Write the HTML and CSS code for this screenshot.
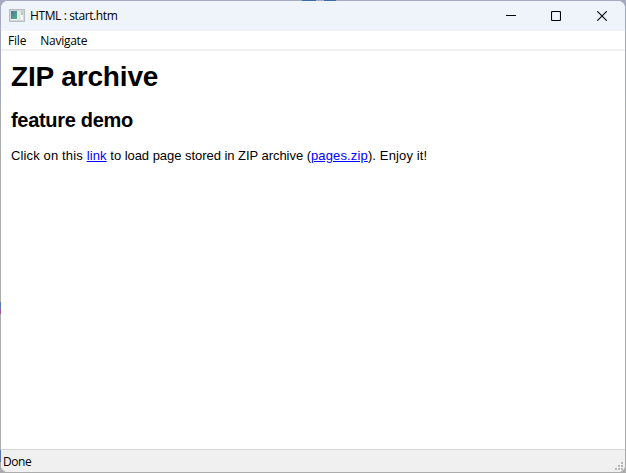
FILE: index.html
```html
<!DOCTYPE html>
<html lang="en">
<head>
<meta charset="utf-8">
<title>HTML : start.htm</title>
<link rel="stylesheet" href="styles.css">
</head>
<body>
<div class="window">
  <header class="titlebar">
    <svg class="app-icon" width="16" height="16" viewBox="0 0 16 16">
      <defs><linearGradient id="pane" x1="0" y1="0" x2="1" y2="1"><stop offset="0" stop-color="#4878a8"/><stop offset="1" stop-color="#58b080"/></linearGradient></defs>
      <rect y="1" width="16" height="13" fill="#b8bcc0"/>
      <rect x="1" y="2" width="14" height="11" fill="#d4d7da"/>
      <rect x="2" y="3" width="12" height="9" fill="#f6f8f8"/>
      <rect x="2" y="3" width="6" height="8" fill="url(#pane)"/>
      <rect x="8" y="3" width="4" height="9" fill="#e5e8e8"/>
      <rect x="12" y="3" width="2" height="4" fill="#b4d0bb"/>
    </svg>
    <span class="title">HTML : start.htm</span>
    <div class="controls">
      <svg width="10" height="10"><path d="M0 4.5H10" stroke="#000"/></svg>
      <svg width="10" height="10"><rect x=".5" y=".5" width="9" height="9" rx="1" fill="none" stroke="#000" stroke-width="1.1"/></svg>
      <svg width="10" height="10"><path d="M.2 .2L9.8 9.8M9.8 .2L.2 9.8" stroke="#000" stroke-width="1.1"/></svg>
    </div>
  </header>
  <nav class="menu"><span class="file">File</span><span class="navigate">Navigate</span></nav>
  <main class="page">
    <h1>ZIP archive</h1>
    <h2>feature demo</h2>
    <p><span class="wide">Click on this <a href="#">link</a></span><span class="narrow"> to load page stored in ZIP archive (</span><span class="wide"><a href="#">pages.zip</a>). Enjoy it!</span></p>
  </main>
  <footer class="status">
    <span class="status-text">Done</span>
    <svg class="grip" width="8" height="8" fill="#b8b8b8"><path d="M6 0h2v2H6zM3 3h2v2H3zM6 3h2v2H6zM0 6h2v2H0zM3 6h2v2H3zM6 6h2v2H6z"/></svg>
  </footer>
</div>
</body>
</html>
```
FILE: styles.css
```css
* { box-sizing: border-box; }
body {
  margin: 0;
  height: 473px;
  overflow: hidden;
  background:
    linear-gradient(#5a78b0, #5a78b0) 0 302px / 1px 7px no-repeat,
    linear-gradient(#a05898, #a05898) 0 309px / 1px 5px no-repeat,
    linear-gradient(#5a78b0, #5a78b0) 0 450px / 1px 12px no-repeat,
    linear-gradient(#3a6ca5, #3a6ca5) 302px 0 / 14px 1px no-repeat,
    linear-gradient(#3a6ca5, #3a6ca5) 324px 0 / 12px 1px no-repeat,
    linear-gradient(#a5aabf 0, #a5aabf 100px, #acacac 110px);
}
.window {
  display: flex;
  flex-direction: column;
  width: 624px;
  height: 471px;
  margin-left: 1px;
  position: relative;
  top: 1px;
  overflow: hidden;
  border-radius: 7px;
  background: #fff;
  color: #000;
  font-family: "Open Sans", "Noto Sans", sans-serif;
  font-size: 12px;
}
.titlebar {
  display: flex;
  align-items: center;
  flex: 0 0 30px;
  padding: 0 18px 0 8px;
  background: #eff3fa;
}
.app-icon { margin-right: 5px; }
.title { letter-spacing: -.39px; line-height: 16px; }
.controls { display: flex; gap: 36px; margin-left: auto; }
.controls svg { display: block; }
.controls svg:first-child { margin-right: -1px; }
.menu {
  display: flex;
  flex: 0 0 20px;
  min-height: 0;
  gap: 14px;
  padding-left: 7px;
  border-bottom: 2px solid #f0f0f0;
  line-height: 20px;
}
.file { letter-spacing: -.2px; }
.navigate { letter-spacing: -.25px; }
.page {
  flex: 1;
  padding: 9px 10px;
  font-family: "Liberation Sans", Arial, sans-serif;
}
h1 { margin: 0; font-size: 28px; line-height: 34px; letter-spacing: -.15px; }
h2 { margin: 14px 0 0; font-size: 20px; line-height: 24px; letter-spacing: -.3px; }
p { margin: 16px 0 0; font-size: 13px; line-height: 16px; }
.wide { letter-spacing: .14px; }
.narrow { letter-spacing: -.04px; }
a { color: #00f; }
.status {
  display: flex;
  flex: 0 0 23px;
  align-items: flex-end;
  justify-content: space-between;
  padding: 0 2px 2px;
  border-top: 1px solid #d7d7d7;
  background: #f0f0f0;
}
.status-text { letter-spacing: -.45px; line-height: 16px; }
```
